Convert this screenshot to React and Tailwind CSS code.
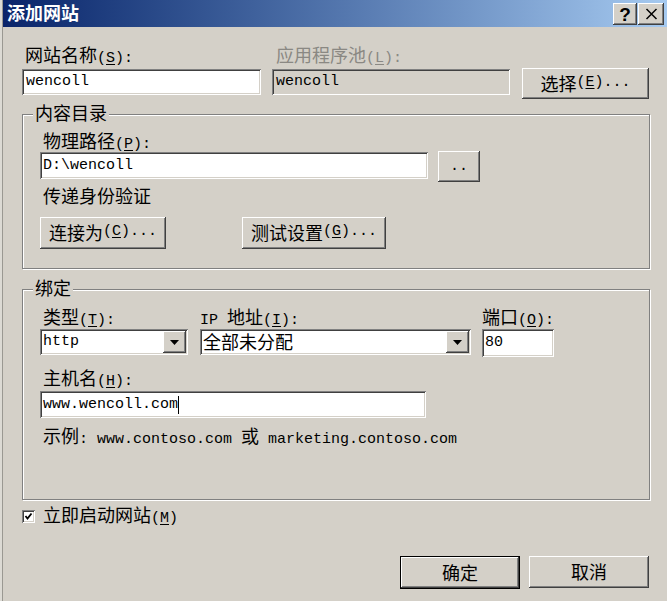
import React from "react";

const sunken =
  "shadow-[inset_1px_1px_0_#808080,inset_-1px_-1px_0_#ffffff,inset_2px_2px_0_#404040,inset_-2px_-2px_0_#d4d0c8]";
const raised =
  "shadow-[inset_-1px_-1px_0_#404040,inset_1px_1px_0_#ffffff,inset_-2px_-2px_0_#808080,inset_2px_2px_0_#d4d0c8]";
const etched = "border border-[#808080] shadow-[1px_1px_0_#ffffff,inset_1px_1px_0_#ffffff]";

function M({ children }) {
  return <span className="font-['Liberation_Mono',monospace] text-[15px]">{children}</span>;
}

function Arrow() {
  return (
    <svg width="9" height="5" viewBox="0 0 9 5">
      <polygon points="0,0 9,0 4.5,5" fill="#000" />
    </svg>
  );
}

function Group({ title, className, children }) {
  return (
    <div className={`relative ml-[19px] w-[628px] ${etched} ${className}`}>
      <span className="absolute left-[10px] -top-[13px] px-[2px] bg-[#d4d0c8] leading-[20px] whitespace-nowrap">{title}</span>
      {children}
    </div>
  );
}

export default function App() {
  return (
    <div className="w-[667px] h-[601px] bg-[#d4d0c8] flex overflow-hidden font-['Noto_Sans_CJK_SC',sans-serif] text-[18px] leading-[20px] text-black whitespace-nowrap">
      <div className="w-[2px] shrink-0 bg-[#dcdad4]" />
      <div className="flex-1 flex flex-col border-l border-[#9a9892] min-w-0">
        {/* Title bar */}
        <div className="h-[27px] shrink-0 flex items-start bg-linear-to-r from-[#0a246a] to-[#a6caf0]">
          <div className="pl-[4px] pt-[2px] text-white font-bold text-[18px] leading-[20px]">添加网站</div>
          <div className="ml-auto mt-[3px] mr-[3px] flex gap-[1px]">
            <div className={`w-[24px] h-[22px] bg-[#d4d0c8] ${raised} flex items-center justify-center font-['Liberation_Sans',sans-serif] font-bold text-[19px] leading-none`}>
              ?
            </div>
            <div className={`w-[26px] h-[22px] bg-[#d4d0c8] ${raised} flex items-center justify-center`}>
              <svg width="13" height="12" viewBox="0 0 13 12">
                <path d="M1.5 1 L11.5 11 M11.5 1 L1.5 11" stroke="#000" strokeWidth="1.5" fill="none" />
              </svg>
            </div>
          </div>
        </div>

        {/* Row 1 */}
        <div className="mt-[17px] ml-[19px] flex items-start">
          <div className="w-[239px]">
            <div className="pl-[3px] h-[20px]">
              网站名称<M>(<u className="underline-offset-2">S</u>):</M>
            </div>
            <div className={`mt-[5px] h-[26px] bg-white ${sunken} flex items-center pl-[4px]`}>
              <M>wencoll</M>
            </div>
          </div>
          <div className="ml-[11px] w-[238px]">
            <div className="pl-[4px] h-[20px] text-[#8a8883]">
              应用程序池<M>(<u className="underline-offset-2">L</u>):</M>
            </div>
            <div className={`mt-[5px] h-[26px] bg-[#d4d0c8] ${sunken} flex items-center pl-[4px]`}>
              <M>wencoll</M>
            </div>
          </div>
          <div className={`ml-[12px] mt-[24px] w-[127px] h-[31px] ${raised} flex items-center justify-center pb-[2px]`}>
            选择<M>(<u className="underline-offset-2">E</u>)...</M>
          </div>
        </div>

        {/* Group 1 */}
        <Group title="内容目录" className="mt-[15px] h-[155px]">
          <div className="pt-[15px] pl-[17px]">
            <div className="ml-[3px] h-[20px]">
              物理路径<M>(<u className="underline-offset-2">P</u>):</M>
            </div>
            <div className="mt-[1px] flex items-start">
              <div className={`mt-[1px] w-[388px] h-[27px] bg-white ${sunken} flex items-center pl-[3px]`}>
                <M>D:\wencoll</M>
              </div>
              <div className={`ml-[10px] w-[42px] h-[31px] ${raised} flex items-center justify-center`}>
                <M>..</M>
              </div>
            </div>
            <div className="mt-[3px] ml-[3px] h-[20px]">传递身份验证</div>
            <div className="mt-[12px] flex">
              <div className={`w-[126px] h-[32px] ${raised} flex items-center justify-center pb-[2px]`}>
                连接为<M>(<u className="underline-offset-2">C</u>)...</M>
              </div>
              <div className={`ml-[76px] w-[144px] h-[32px] ${raised} flex items-center justify-center pb-[2px]`}>
                测试设置<M>(<u className="underline-offset-2">G</u>)...</M>
              </div>
            </div>
          </div>
        </Group>

        {/* Group 2 */}
        <Group title="绑定" className="mt-[20px] h-[211px]">
          <div className="pt-[16px] pl-[17px]">
            <div className="flex items-start">
              <div className="w-[148px]">
                <div className="pl-[3px] h-[20px]">
                  类型<M>(<u className="underline-offset-2">T</u>):</M>
                </div>
                <div className={`mt-[3px] h-[26px] bg-white ${sunken} flex items-center pl-[3px] pr-[2px]`}>
                  <M>http</M>
                  <div className={`ml-auto w-[23px] h-[22px] bg-[#d4d0c8] ${raised} flex items-center justify-center`}>
                    <Arrow />
                  </div>
                </div>
              </div>
              <div className="ml-[12px] w-[271px]">
                <div className="h-[20px]">
                  <M>IP </M>地址<M>(<u className="underline-offset-2">I</u>):</M>
                </div>
                <div className={`mt-[3px] h-[26px] bg-white ${sunken} flex items-center pl-[3px] pr-[2px]`}>
                  <span className="pb-[2px]">全部未分配</span>
                  <div className={`ml-auto w-[23px] h-[22px] bg-[#d4d0c8] ${raised} flex items-center justify-center`}>
                    <Arrow />
                  </div>
                </div>
              </div>
              <div className="ml-[11px] w-[72px]">
                <div className="h-[20px]">
                  端口<M>(<u className="underline-offset-2">O</u>):</M>
                </div>
                <div className={`mt-[3px] h-[28px] bg-white ${sunken} flex items-center pl-[3px]`}>
                  <M>80</M>
                </div>
              </div>
            </div>
            <div className="mt-[10px] ml-[3px] h-[20px]">
              主机名<M>(<u className="underline-offset-2">H</u>):</M>
            </div>
            <div className={`mt-[4px] w-[386px] h-[27px] bg-white ${sunken} flex items-center pl-[3px]`}>
              <M>www.wencoll.com</M>
              <span className="w-[1px] h-[18px] bg-black" />
            </div>
            <div className="mt-[7px] ml-[3px] h-[20px]">
              示例<M>: www.contoso.com </M>或<M> marketing.contoso.com</M>
            </div>
          </div>
        </Group>

        {/* Checkbox */}
        <div className="mt-[6px] ml-[19px] h-[20px] flex items-center">
          <div className={`w-[13px] h-[13px] bg-white ${sunken} flex items-center justify-center`}>
            <svg width="9" height="9" viewBox="0 0 9 9">
              <path d="M1.5 4 L3.5 6.5 L7.5 1.5" stroke="#000" strokeWidth="1.8" fill="none" />
            </svg>
          </div>
          <div className="ml-[8px]">
            立即启动网站<M>(<u className="underline-offset-2">M</u>)</M>
          </div>
        </div>

        {/* Bottom buttons */}
        <div className="mt-[30px] pr-[18px] flex justify-end items-start gap-[9px]">
          <div className="w-[120px] h-[33px] border border-black">
            <div className={`w-full h-full ${raised} flex items-center justify-center pb-[2px]`}>确定</div>
          </div>
          <div className={`w-[120px] h-[32px] ${raised} flex items-center justify-center pb-[2px]`}>取消</div>
        </div>
      </div>
    </div>
  );
}
